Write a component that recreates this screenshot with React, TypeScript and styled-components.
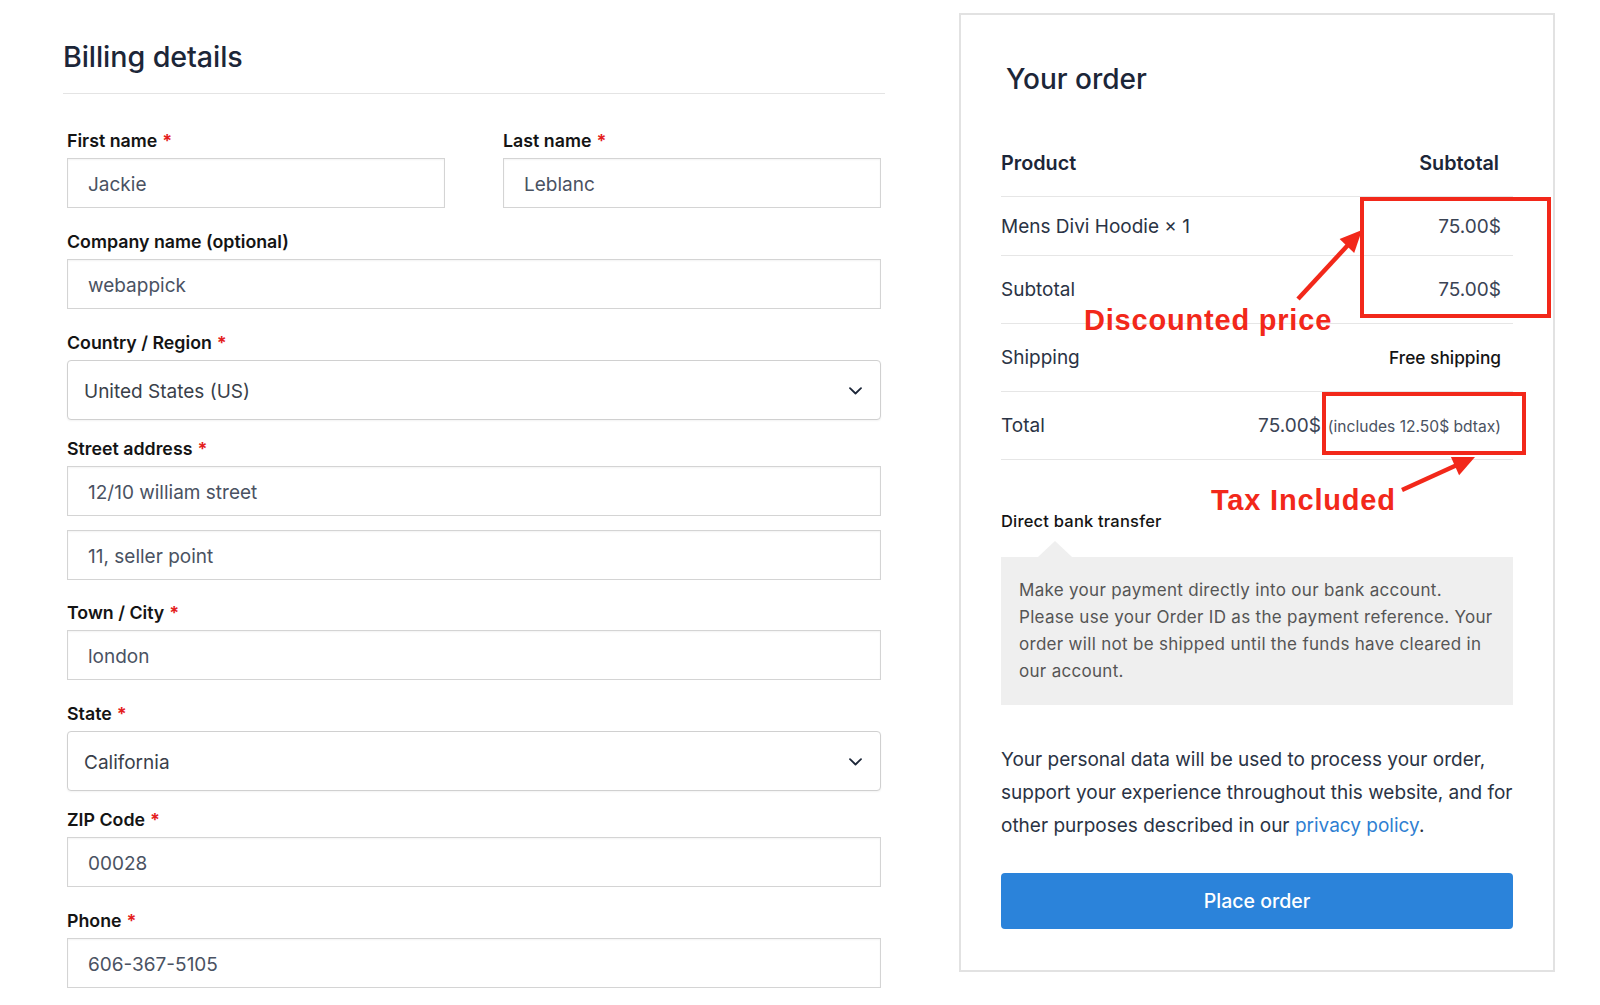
import React from 'react';
import styled, { createGlobalStyle } from 'styled-components';

const GlobalStyle = createGlobalStyle`
    html, body {
        margin: 0;
        padding: 0;
        background: #fff;
    }
    body {
        font-family: Inter, "Noto Sans", sans-serif;
        -webkit-font-smoothing: antialiased;
    }
    * {
        box-sizing: border-box;
    }
`;

const RED = '#f2281a';

/* ---------- page ---------- */

const Page = styled.div`
    position: relative;
    width: 1600px;
    height: 1005px;
    display: flex;
    align-items: flex-start;
    gap: 74px;
    padding: 13px 0 0 63px;
    overflow: hidden;
`;

/* ---------- billing column ---------- */

const Billing = styled.section`
    width: 822px;
    padding-top: 27px;
`;

const BillingTitle = styled.h3`
    margin: 0;
    padding-bottom: 19px;
    border-bottom: 1px solid #e4e4e4;
    font-size: 28.7px;
    line-height: 34px;
    font-weight: 500;
    color: #1c2638;
    letter-spacing: -0.1px;
`;

const Form = styled.div`
    padding: 35px 4px 0;
`;

const Row = styled.div`
    display: grid;
    grid-template-columns: 1fr 1fr;
    gap: 58px;
`;

const Field = styled.div<{ $after?: number }>`
    margin-bottom: ${({ $after }) => $after ?? 22}px;
`;

const Label = styled.label`
    display: block;
    margin-bottom: 5px;
    font-size: 17.8px;
    line-height: 24px;
    font-weight: 600;
    color: #141414;
`;

const Required = styled.span`
    margin-left: 5px;
    color: #e41e1e;
    font-weight: 700;
`;

const InputBox = styled.div`
    display: flex;
    align-items: center;
    height: 50px;
    padding: 3px 20px 0;
    border: 1px solid #d4d4d4;
    background: #fff;
    box-shadow: inset 0 1px 2px rgba(0, 0, 0, 0.05);
    font-size: 19px;
    color: #4a5262;
`;

const SelectBox = styled.div`
    display: flex;
    align-items: center;
    justify-content: space-between;
    height: 60px;
    padding: 2px 18px 0 16px;
    border: 1px solid #d0d0d0;
    border-radius: 4px;
    background: #fff;
    box-shadow: 0 1px 2px rgba(0, 0, 0, 0.05);
    font-size: 19px;
    color: #3a3f4a;
`;

const StackedInput = styled(InputBox)`
    margin-top: 14px;
`;

/* ---------- order card ---------- */

const OrderCard = styled.aside`
    width: 596px;
    border: 2px solid #e2e2e2;
    padding: 47px 40px 41px;
`;

const OrderTitle = styled.h3`
    margin: 0;
    padding-left: 5px;
    font-size: 28px;
    line-height: 34px;
    font-weight: 500;
    color: #1c2638;
`;

const Table = styled.div`
    margin-top: 33px;
`;

const TableRow = styled.div<{ $height?: number; $head?: boolean }>`
    display: flex;
    align-items: center;
    justify-content: space-between;
    height: ${({ $height }) => $height ?? 68}px;
    padding-right: ${({ $head }) => ($head ? 14 : 12)}px;
    border-bottom: 1px solid #e6e6e6;
    font-size: ${({ $head }) => ($head ? 19.8 : 19)}px;
    font-weight: ${({ $head }) => ($head ? 600 : 400)};
    color: ${({ $head }) => ($head ? '#1c2638' : '#2a3344')};
`;

const Value = styled.span`
    display: flex;
    align-items: baseline;
    color: #3a4354;
`;

const FreeShipping = styled.span`
    font-size: 17.3px;
    font-weight: 500;
    color: #141414;
`;

const TaxNote = styled.small`
    margin-left: 7px;
    font-size: 15.6px;
    color: #4a5262;
`;

const PayLabel = styled.div`
    margin-top: 49px;
    font-size: 16.5px;
    line-height: 24px;
    font-weight: 500;
    color: #141414;
    letter-spacing: 0.2px;
`;

const PayBox = styled.div`
    position: relative;
    margin-top: 24px;
    padding: 20px 18px;
    background: #efefef;
    font-size: 17px;
    line-height: 27px;
    letter-spacing: 0.3px;
    color: #555;
    white-space: nowrap;

    &::before {
        content: '';
        position: absolute;
        top: -16px;
        left: 37px;
        border-left: 17px solid transparent;
        border-right: 17px solid transparent;
        border-bottom: 16px solid #efefef;
    }
`;

const Privacy = styled.p`
    margin: 38px 0 0;
    font-size: 19px;
    line-height: 33px;
    color: #2a3344;
    white-space: nowrap;
`;

const Link = styled.a`
    color: #2f7fd2;
    text-decoration: none;
`;

const PlaceOrder = styled.button`
    display: block;
    width: 100%;
    height: 56px;
    margin-top: 31px;
    border: none;
    border-radius: 4px;
    background: #2b83da;
    color: #fff;
    font-family: inherit;
    font-size: 19.5px;
    font-weight: 500;
    cursor: pointer;
`;

/* ---------- annotations (overlay) ---------- */

const Highlight = styled.div<{ $x: number; $y: number; $w: number; $h: number }>`
    position: absolute;
    left: ${({ $x }) => $x}px;
    top: ${({ $y }) => $y}px;
    width: ${({ $w }) => $w}px;
    height: ${({ $h }) => $h}px;
    border: 4px solid ${RED};
    pointer-events: none;
`;

const Callout = styled.span<{ $x: number; $y: number }>`
    position: absolute;
    left: ${({ $x }) => $x}px;
    top: ${({ $y }) => $y}px;
    font-family: "Liberation Sans", Arial, sans-serif;
    font-size: 29px;
    line-height: 1;
    font-weight: 700;
    letter-spacing: 0.8px;
    color: ${RED};
    white-space: nowrap;
    pointer-events: none;
`;

const ArrowLayer = styled.svg`
    position: absolute;
    left: 0;
    top: 0;
    pointer-events: none;
`;

const Chevron = () => (
    <svg width="13" height="8" viewBox="0 0 13 8" fill="none">
        <path d="M1 1.2 L6.5 6.5 L12 1.2" stroke="#1c2638" strokeWidth="1.8" strokeLinecap="round" strokeLinejoin="round" />
    </svg>
);

function TextField({
    label,
    value,
    required = true,
    after,
}: {
    label: string;
    value: string;
    required?: boolean;
    after?: number;
}) {
    return (
        <Field $after={after}>
            <Label>
                {label}
                {required && <Required>*</Required>}
            </Label>
            <InputBox>{value}</InputBox>
        </Field>
    );
}

function SelectField({ label, value }: { label: string; value: string }) {
    return (
        <Field $after={17}>
            <Label>
                {label}
                <Required>*</Required>
            </Label>
            <SelectBox>
                <span>{value}</span>
                <Chevron />
            </SelectBox>
        </Field>
    );
}

export default function App() {
    return (
        <>
            <GlobalStyle />
            <Page>
                <Billing>
                    <BillingTitle>Billing details</BillingTitle>
                    <Form>
                        <Row>
                            <TextField label="First name" value="Jackie" />
                            <TextField label="Last name" value="Leblanc" />
                        </Row>
                        <TextField label="Company name (optional)" value="webappick" required={false} />
                        <SelectField label="Country / Region" value="United States (US)" />
                        <Field $after={21}>
                            <Label>
                                Street address<Required>*</Required>
                            </Label>
                            <InputBox>12/10 william street</InputBox>
                            <StackedInput>11, seller point</StackedInput>
                        </Field>
                        <TextField label="Town / City" value="london" />
                        <SelectField label="State" value="California" />
                        <TextField label="ZIP Code" value="00028" />
                        <TextField label="Phone" value="606-367-5105" />
                    </Form>
                </Billing>

                <OrderCard>
                    <OrderTitle>Your order</OrderTitle>
                    <Table>
                        <TableRow $head>
                            <span>Product</span>
                            <span>Subtotal</span>
                        </TableRow>
                        <TableRow $height={59}>
                            <span>Mens Divi Hoodie × 1</span>
                            <Value>75.00$</Value>
                        </TableRow>
                        <TableRow>
                            <span>Subtotal</span>
                            <Value>75.00$</Value>
                        </TableRow>
                        <TableRow>
                            <span>Shipping</span>
                            <FreeShipping>Free shipping</FreeShipping>
                        </TableRow>
                        <TableRow>
                            <span>Total</span>
                            <Value>
                                75.00$<TaxNote>(includes 12.50$ bdtax)</TaxNote>
                            </Value>
                        </TableRow>
                    </Table>

                    <PayLabel>Direct bank transfer</PayLabel>
                    <PayBox>
                        Make your payment directly into our bank account.
                        <br />
                        Please use your Order ID as the payment reference. Your
                        <br />
                        order will not be shipped until the funds have cleared in
                        <br />
                        our account.
                    </PayBox>

                    <Privacy>
                        Your personal data will be used to process your order,
                        <br />
                        support your experience throughout this website, and for
                        <br />
                        other purposes described in our <Link href="#">privacy policy</Link>.
                    </Privacy>

                    <PlaceOrder type="button">Place order</PlaceOrder>
                </OrderCard>

                <Highlight $x={1360} $y={197} $w={191} $h={121} />
                <Highlight $x={1322} $y={392} $w={204} $h={63} />
                <Callout $x={1084} $y={306}>Discounted price</Callout>
                <Callout $x={1211} $y={486}>Tax Included</Callout>
                <ArrowLayer width="1600" height="1005" viewBox="0 0 1600 1005">
                    <line x1="1298" y1="299" x2="1348" y2="245" stroke={RED} strokeWidth="4.5" />
                    <polygon points="1362,230 1354.2,252.9 1339.6,239.1" fill={RED} />
                    <line x1="1402" y1="490" x2="1457" y2="465" stroke={RED} strokeWidth="4.5" />
                    <polygon points="1475,457 1459.1,475.2 1450.9,457" fill={RED} />
                </ArrowLayer>
            </Page>
        </>
    );
}
